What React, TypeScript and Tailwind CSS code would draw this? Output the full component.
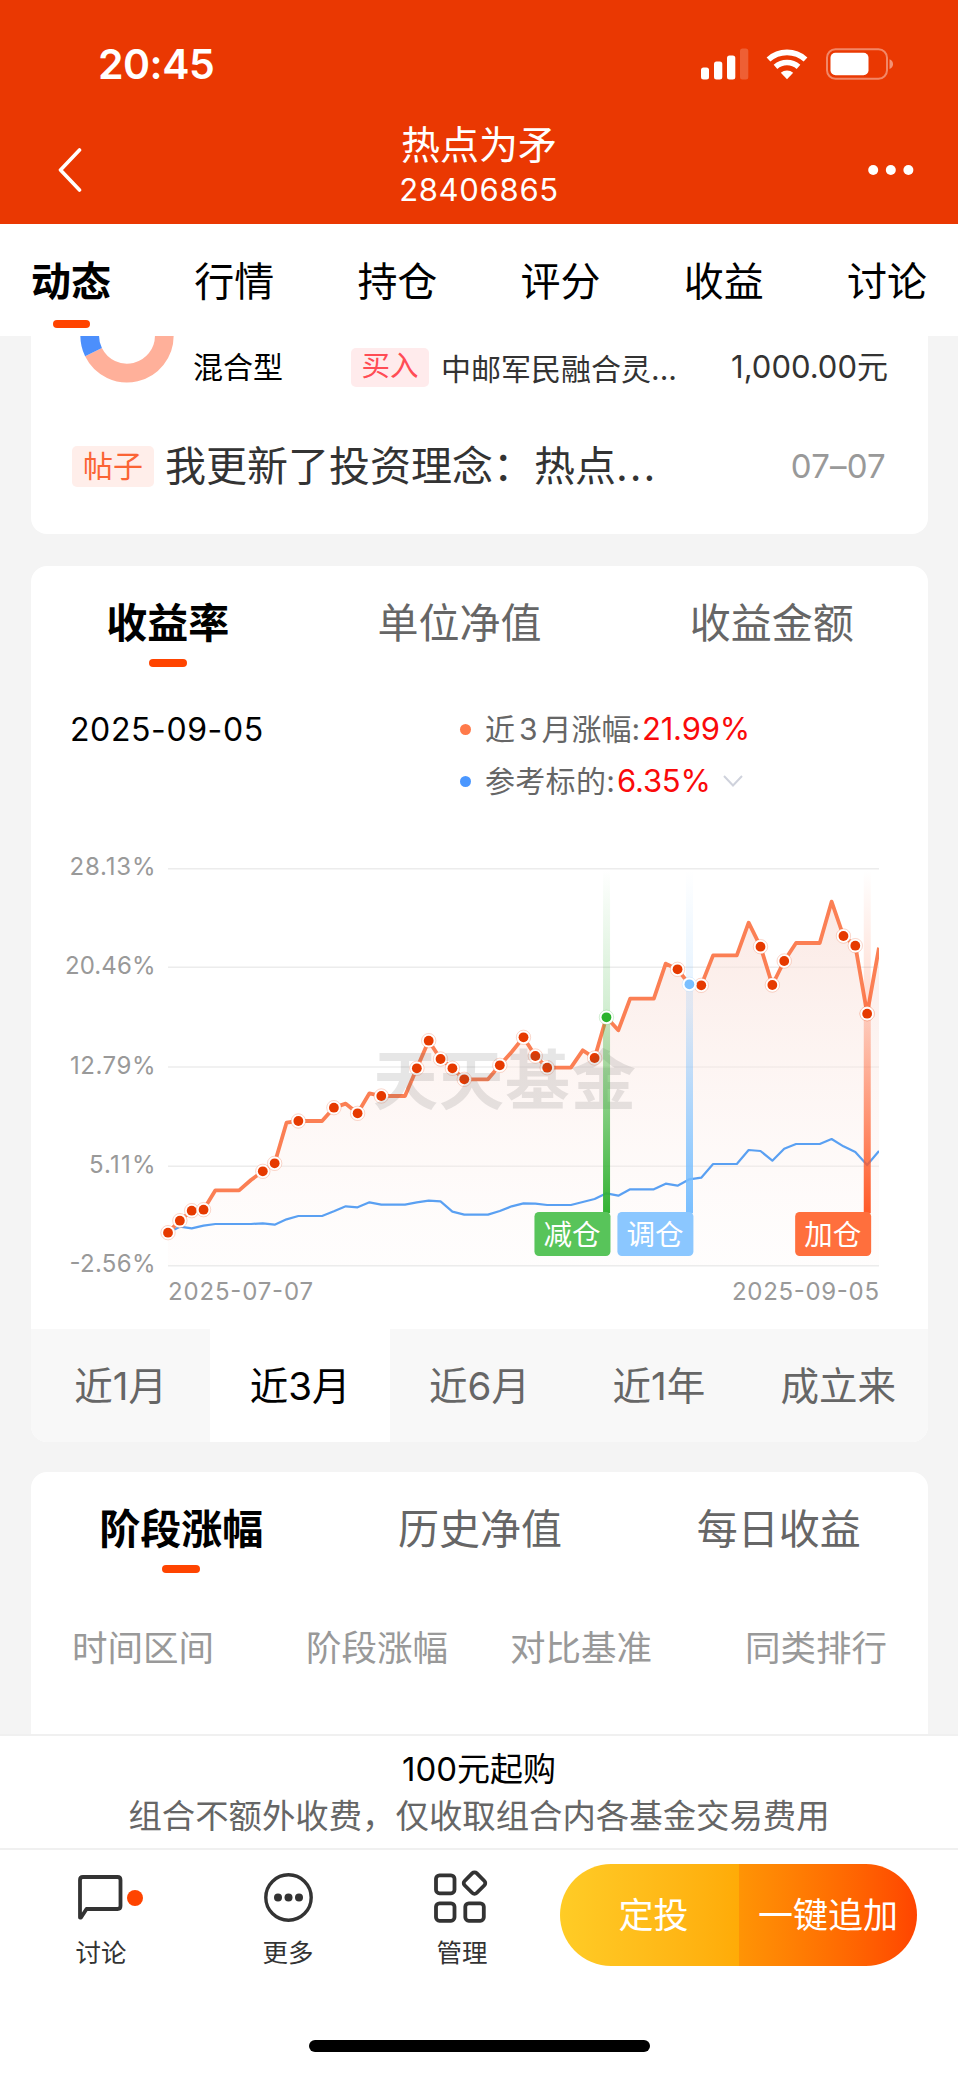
import { ReactNode } from "react";

type Marker = {
  day: number;
  label: string;
  color: string;
  fill: string;
  id: string;
};

const navTabs = ["动态", "行情", "持仓", "评分", "收益", "讨论"];
const periods = ["近1月", "近3月", "近6月", "近1年", "成立来"];

// chart heights, in thirds of a pixel from the top of the chart
const fundLine = [
  1178, 1142, 1112, 1109, 1051, 1051, 1051, 1020, 994, 970, 848, 843, 843, 843,
  803, 791, 820, 760, 768, 768, 768, 685, 602, 657, 685, 718, 718, 718, 676,
  636, 592, 648, 683, 683, 683, 631, 654, 532, 571, 476, 476, 476, 371, 388,
  433, 436, 346, 346, 346, 248, 320, 435, 363, 309, 309, 309, 185, 288, 317,
  521, 323,
];
const baseLine = [
  1178, 1160, 1165, 1157, 1152, 1152, 1152, 1152, 1150, 1154, 1138, 1128, 1128,
  1128, 1114, 1099, 1102, 1087, 1094, 1094, 1094, 1087, 1082, 1084, 1115, 1124,
  1124, 1124, 1113, 1099, 1090, 1091, 1095, 1095, 1095, 1086, 1077, 1060, 1067,
  1048, 1048, 1048, 1031, 1037, 1018, 1013, 972, 972, 972, 930, 933, 962, 926,
  912, 912, 912, 897, 919, 936, 975, 933,
];
const tradeDays = [
  0, 1, 2, 3, 8, 9, 11, 14, 16, 18, 21, 22, 23, 24, 25, 28, 30, 31, 32, 36, 43,
  45, 50, 51, 52, 57, 58, 59,
];
const gridLines = [
  { y: 28.7, label: "28.13%", width: 86 },
  { y: 127.3, label: "20.46%", width: 90.5 },
  { y: 227, label: "12.79%", width: 85.5 },
  { y: 326.3, label: "5.11%", width: 66.5 },
  { y: 425.7, label: "-2.56%", width: 86 },
];
const markers: Marker[] = [
  { day: 37, label: "减仓", color: "#33b233", fill: "#58c45a", id: "sell" },
  { day: 44, label: "调仓", color: "#79bfff", fill: "#8bc7ff", id: "adjust" },
  { day: 59, label: "加仓", color: "#ff5a28", fill: "#ff6f3d", id: "buy" },
];

const LEFT = 137;
const STEP = 11.85;
const px = (day: number) => LEFT + day * STEP;
const toPoints = (values: number[]) =>
  values.map((v, day) => `${px(day)},${v / 3}`).join(" ");

const StatusBar = () => (
  <div className="flex justify-between items-center h-16 pl-[98px] pr-[65px] box-content pt-8">
    <span className="text-[41px] font-semibold leading-none tracking-[-0.5px] text-white">
      20:45
    </span>
    <svg width="192" height="32" viewBox="0 0 192 32" fill="#fff">
      <rect x="0" y="19.5" width="8" height="12" rx="2.5" />
      <rect x="13" y="13.5" width="8.3" height="18" rx="2.5" />
      <rect x="26" y="7.5" width="8.3" height="24" rx="2.5" />
      <rect x="39" y="0.5" width="8.3" height="31" rx="2.5" opacity="0.2" />
      <g fill="none" stroke="#fff" strokeWidth="5.6">
        <path d="M67.5 11.5a27.5 27.5 0 0 1 37 0" />
        <path d="M74.5 18.8a17.5 17.5 0 0 1 23 0" />
      </g>
      <path d="M86 31.2l-6.2-6.4a9.2 9.2 0 0 1 12.4 0z" />
      <rect
        x="126"
        y="1.2"
        width="60"
        height="29.6"
        rx="8.5"
        fill="none"
        stroke="#fff"
        strokeOpacity="0.4"
        strokeWidth="2"
      />
      <rect x="129.5" y="4.7" width="38" height="22.6" rx="5" />
      <path d="M188.5 11.3c4.7 2 4.7 7.7 0 9.7z" opacity="0.45" />
    </svg>
  </div>
);

const Header = () => (
  <header className="h-[224px] bg-[#ea3802] text-white">
    <StatusBar />
    <div className="flex justify-between items-center h-[128px] pl-[58px] pr-[44px] pt-5">
      <svg width="60" height="44" viewBox="0 0 60 44" fill="none">
        <path
          d="M21.5 2L2.5 22l19 20"
          stroke="#fff"
          strokeWidth="3.6"
          strokeLinecap="round"
          strokeLinejoin="round"
        />
      </svg>
      <div className="flex flex-col items-center -mt-[15px] pr-[28px] pt-2">
        <h1 className="text-[39px] leading-[46px]">热点为矛</h1>
        <span className="text-[31px] leading-[44px] tracking-[0.7px]">
          28406865
        </span>
      </div>
      <svg width="46" height="12" viewBox="0 0 46 12" fill="#fff">
        <circle cx="5.2" cy="6" r="5" />
        <circle cx="22.8" cy="6" r="5" />
        <circle cx="40.4" cy="6" r="5" />
      </svg>
    </div>
  </header>
);

const NavTabs = () => (
  <nav className="flex justify-between h-28 px-[31px] pt-[34px] bg-white">
    {navTabs.map((tab, i) => (
      <div key={tab} className="flex flex-col items-center">
        <span
          className={
            i === 0
              ? "text-[40px] leading-[48px] font-bold text-black"
              : "text-[40px] leading-[48px] text-black"
          }
        >
          {tab}
        </span>
        {i === 0 && (
          <i className="w-[37px] h-2 mt-[14px] rounded-[4px] bg-[#ff4400]" />
        )}
      </div>
    ))}
  </nav>
);

const FeedCard = () => (
  <section className="h-[198px] px-[41px] bg-white rounded-b-[16px]">
    <div className="flex h-[78px] items-start">
      <svg
        className="ml-2"
        width="94"
        height="47"
        viewBox="80 336 94 47"
        fill="none"
        strokeWidth="18.7"
      >
        <path d="M164.3 335.6a37.3 37.3 0 0 1-70.8 16.6" stroke="#ffb09a" />
        <path d="M89.7 335.6a37.3 37.3 0 0 0 3.8 16.6" stroke="#4c8ffc" />
      </svg>
      <span className="w-[90px] ml-[19px] mt-[13px] text-[30px] leading-9 text-black">
        混合型
      </span>
      <span className="w-[78px] h-[39px] ml-[68px] mt-3 rounded-[5px] bg-[#ffebec] text-center text-[28.5px] leading-[36px] text-[#ff4c54]">
        买入
      </span>
      <span className="ml-[12px] mt-[15px] text-[30px] leading-9 text-[#333]">
        中邮军民融合灵...
      </span>
      <span className="ml-auto -mr-px mt-[13px] text-[31px] leading-9 text-[#333]">
        1,000.00元
      </span>
    </div>
    <div className="flex items-center h-[104px]">
      <span className="w-[82px] h-[41px] rounded-[5px] bg-[#ffeeea] text-center text-[30px] leading-[41px] text-[#fb6435]">
        帖子
      </span>
      <span className="ml-[11px] text-[41px] leading-[50px] text-[#333]">
        我更新了投资理念：热点<span className="tracking-[2px]">...</span>
      </span>
      <span className="ml-auto mr-px text-[33px] leading-[40px] tracking-[0.2px] text-[#999]">
        07–07
      </span>
    </div>
  </section>
);

const CardTabs = ({ items }: { items: string[] }) => (
  <div className="flex justify-around pl-px pt-[32px] h-[108px]">
    {items.map((item, i) => (
      <div key={item} className="flex flex-col items-center">
        <span
          className={
            i === 0
              ? "text-[41px] leading-[50px] font-bold text-black"
              : "text-[41px] leading-[50px] text-[#666]"
          }
        >
          {item}
        </span>
        {i === 0 && (
          <i className="w-[38px] h-[8px] mt-[11px] rounded-[4px] bg-[#ff4400]" />
        )}
      </div>
    ))}
  </div>
);

const Legend = () => (
  <div className="flex h-[126px] pl-[39px] pt-[29px]">
    <span className="w-[390px] pt-px text-[32px] leading-[52px] tracking-[0.6px] text-black">
      2025-09-05
    </span>
    <div className="text-[30px] leading-[52px] text-[#666]">
      <div className="flex items-center">
        <i className="w-[11px] h-[11px] rounded-full bg-[#ff7a4a]" />
        <span className="w-[157px] ml-[14px] whitespace-nowrap">
          近<span className="mx-[4px]">3</span>月涨幅:
        </span>
        <span className="text-[31px] tracking-[-0.2px] text-[#fa0a0a]">
          21.99%
        </span>
      </div>
      <div className="flex items-center">
        <i className="w-[11px] h-[11px] rounded-full bg-[#4a97ff]" />
        <span className="w-[132px] ml-[14px] whitespace-nowrap tracking-[0.3px]">
          参考标的:
        </span>
        <span className="text-[31px] tracking-[-0.2px] text-[#fa0a0a]">
          6.35%
        </span>
        <svg
          className="ml-3"
          width="20"
          height="12"
          viewBox="0 0 20 12"
          fill="none"
        >
          <path d="M1 1l9 9.5L19 1" stroke="#cfd2dc" strokeWidth="2" />
        </svg>
      </div>
    </div>
  </div>
);

const Dot = ({ day, color }: { day: number; color: string }) => (
  <g>
    <circle
      cx={px(day)}
      cy={fundLine[day] / 3}
      r="7.2"
      fill="#fff"
      stroke={color}
      strokeOpacity="0.3"
      strokeWidth="0.7"
    />
    <circle cx={px(day)} cy={fundLine[day] / 3} r="4.9" fill={color} />
  </g>
);

const Chart = () => (
  <svg
    className="block"
    width="897"
    height="489"
    viewBox="0 0 897 489"
    fill="none"
  >
    <defs>
      <linearGradient
        id="area"
        x1="0"
        y1="60"
        x2="0"
        y2="426"
        gradientUnits="userSpaceOnUse"
      >
        <stop offset="0" stopColor="#f9e0d9" stopOpacity="0.7" />
        <stop offset="1" stopColor="#fdf3f0" stopOpacity="0.15" />
      </linearGradient>
      {markers.map((m) => (
        <linearGradient key={m.id} id={m.id} x1="0" y1="0" x2="0" y2="1">
          <stop offset="0" stopColor={m.color} stopOpacity="0" />
          <stop offset="0.4" stopColor={m.color} stopOpacity="0.22" />
          <stop offset="1" stopColor={m.color} />
        </linearGradient>
      ))}
      <clipPath id="plot">
        <rect x="120" y="0" width="728" height="489" />
      </clipPath>
    </defs>

    {gridLines.map((g) => (
      <g key={g.label}>
        <path d={`M${LEFT} ${g.y}H848`} stroke="#ececec" strokeWidth="1.6" />
        <text
          x={124.5 - g.width}
          y={g.y + 6.6}
          fontSize="24"
          fill="#999"
          textLength={g.width}
        >
          {g.label}
        </text>
      </g>
    ))}

    <g clipPath="url(#plot)">
      <polygon
        points={`${LEFT},425 ${toPoints(fundLine)} 848,425`}
        fill="url(#area)"
      />
      <polyline
        points={toPoints(baseLine)}
        stroke="#5aa0f2"
        strokeWidth="2.2"
        strokeLinejoin="round"
      />
      <polyline
        points={toPoints(fundLine)}
        stroke="#fb7f54"
        strokeWidth="3.8"
        strokeLinejoin="round"
      />
    </g>

    {tradeDays.map((day) => (
      <Dot key={day} day={day} color="#e63a00" />
    ))}

    <text
      x="342"
      y="264"
      fontSize="65"
      fontWeight="700"
      textLength="263"
      fill="#555"
      fillOpacity="0.15"
    >
      天天基金
    </text>

    {markers.map((m) => (
      <g key={m.id}>
        <rect
          x={px(m.day) - 3.4}
          y="30"
          width="7"
          height="343"
          fill={`url(#${m.id})`}
        />
        <rect
          x={px(m.day) - 72}
          y="372"
          width="76"
          height="44"
          rx="4.5"
          fill={m.fill}
        />
        <text x={px(m.day) - 63} y="404.5" fontSize="28.5" fill="#fff">
          {m.label}
        </text>
      </g>
    ))}
    <Dot day={37} color="#29b32c" />
    <Dot day={44} color="#79bfff" />
    <Dot day={59} color="#e63a00" />

    <text x="137" y="459.5" fontSize="24" fill="#999" textLength="145">
      2025-07-07
    </text>
    <text x="701" y="459.5" fontSize="24" fill="#999" textLength="147">
      2025-09-05
    </text>
  </svg>
);

const PeriodTabs = () => (
  <div className="grid grid-cols-5 h-[113px] bg-[#f8f8f8]">
    {periods.map((period, i) => (
      <button
        key={period}
        className={
          i === 1
            ? "pt-[3px] bg-white text-[38.5px] text-black"
            : "pt-[3px] text-[38.5px] text-[#666]"
        }
      >
        {period}
      </button>
    ))}
  </div>
);

const Notice = () => (
  <div className="flex flex-col items-center h-[116px] pt-3 bg-white border-y-2 border-[#f0f0f0]">
    <p className="text-[33px] leading-[42px] text-black">100元起购</p>
    <p className="mt-[4px] text-[33.4px] leading-[44px] text-[#666]">
      组合不额外收费，仅收取组合内各基金交易费用
    </p>
  </div>
);

const BarItem = ({
  label,
  children,
}: {
  label: string;
  children: ReactNode;
}) => (
  <div className="relative flex flex-col items-center w-[60px]">
    {children}
    <span className="mt-[8px] text-[25.5px] leading-[34px] text-[#333]">
      {label}
    </span>
  </div>
);

const BottomBar = () => (
  <div className="flex h-[190px] pl-[71px] pr-[41px] pt-[14px] bg-white">
    <BarItem label="讨论">
      <svg width="60" height="64" viewBox="71 1864 60 64" fill="none">
        <path
          d="M80 1917.5V1880q0-3 3-3h34.5q3 0 3 3v26q0 3-3 3H86.5L81 1917.5z"
          stroke="#333"
          strokeWidth="3.8"
          strokeLinejoin="round"
        />
      </svg>
      <i className="absolute left-[56px] top-[26px] w-4 h-4 rounded-full bg-[#ff4400]" />
    </BarItem>
    <div className="ml-[127px]">
      <BarItem label="更多">
        <svg width="60" height="64" viewBox="0 0 60 64" fill="none">
          <circle cx="30.5" cy="33.5" r="22.7" stroke="#333" strokeWidth="3.4" />
          <g fill="#333">
            <circle cx="20" cy="33.5" r="4" />
            <circle cx="30.5" cy="33.5" r="4" />
            <circle cx="41" cy="33.5" r="4" />
          </g>
        </svg>
      </BarItem>
    </div>
    <div className="ml-[114px]">
      <BarItem label="管理">
        <svg
          width="60"
          height="64"
          viewBox="432 1864 60 64"
          fill="none"
          stroke="#333"
          strokeWidth="3.8"
        >
          <rect x="436" y="1875.3" width="18.5" height="18" rx="3.5" />
          <rect x="436" y="1903.3" width="18.5" height="17.5" rx="3.5" />
          <rect x="465.3" y="1903.3" width="18.5" height="17.5" rx="3.5" />
          <rect
            x="466"
            y="1874.6"
            width="17"
            height="17"
            rx="3"
            transform="rotate(45 474.5 1883.1)"
          />
        </svg>
      </BarItem>
    </div>
    <div className="flex w-[357px] h-[102px] ml-auto rounded-full overflow-hidden text-[35px] text-white">
      <button className="w-[179px] pl-2 pt-px bg-linear-to-r from-[#ffcc26] to-[#ffab07]">
        定投
      </button>
      <button className="w-[178px] pt-px bg-linear-to-r from-[#ff9405] to-[#ff4400]">
        一键追加
      </button>
    </div>
  </div>
);

const App = () => {
  return (
    <div className="flex flex-col w-[958px] h-[2073px] overflow-hidden bg-[#f4f4f4] font-[Inter,'Noto_Sans_CJK_SC',sans-serif]">
      <Header />
      <NavTabs />
      <main className="h-[1398px] pl-[31px] pr-[30px] overflow-hidden">
        <FeedCard />
        <section className="h-[876px] mt-8 bg-white rounded-[16px] overflow-hidden">
          <CardTabs items={["收益率", "单位净值", "收益金额"]} />
          <Legend />
          <div className="h-10" />
          <Chart />
          <PeriodTabs />
        </section>
        <section className="h-[280px] mt-[30px] bg-white rounded-t-[16px]">
          <CardTabs items={["阶段涨幅", "历史净值", "每日收益"]} />
          <div className="flex pl-[41px] pt-[45px] text-[35.5px] leading-[48px] text-[#999]">
            <span className="w-[234px]">时间区间</span>
            <span className="w-[204px]">阶段涨幅</span>
            <span className="w-[235px]">对比基准</span>
            <span>同类排行</span>
          </div>
        </section>
      </main>
      <Notice />
      <BottomBar />
      <div className="flex-1 bg-white">
        <div className="w-[341px] h-3 mx-auto rounded-full bg-black" />
      </div>
    </div>
  );
};

export default App;
